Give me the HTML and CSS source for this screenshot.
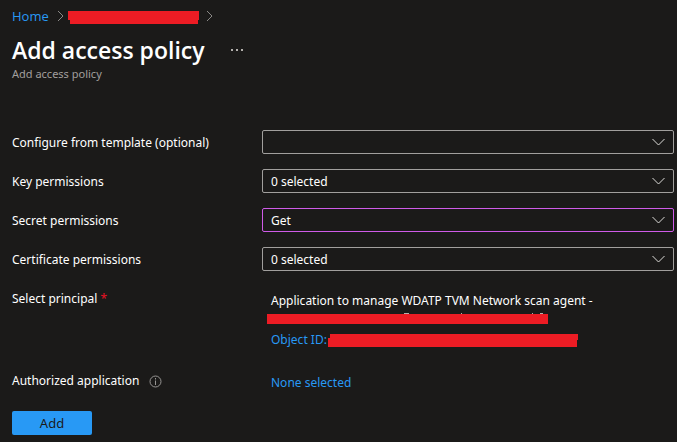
FILE: index.html
```html
<!DOCTYPE html>
<html lang="en">
<head>
<meta charset="utf-8">
<meta name="viewport" content="width=device-width, initial-scale=1">
<title>Add access policy</title>
<link rel="stylesheet" href="styles.css">
</head>
<body>
<header class="header">
  <nav class="breadcrumb" aria-label="Breadcrumb">
    <a class="link" href="#">Home</a>
    <svg class="separator" width="7" height="12" viewBox="0 0 7 12" aria-hidden="true"><path d="M1 1l5 5-5 5"/></svg>
    <svg class="redacted" width="131" height="13" viewBox="0 0 131 13" aria-hidden="true"><path d="M0 0h131v9h-1v4H2V9H0z"/></svg>
    <svg class="separator" width="7" height="12" viewBox="0 0 7 12" aria-hidden="true"><path d="M1 1l5 5-5 5"/></svg>
  </nav>
  <div class="title-row">
    <h1 class="title">Add access policy</h1>
    <button class="more" type="button" aria-label="More">
      <svg width="12" height="2" viewBox="0 0 12 2" aria-hidden="true"><path d="M0 0h2v2H0zM5 0h2v2H5zM10 0h2v2h-2z"/></svg>
    </button>
  </div>
  <p class="subtitle">Add access policy</p>
</header>
<main>
  <form class="form">
    <div class="row">
      <label class="label" for="template">Configure from template (optional)</label>
      <div class="picker">
        <select class="select" id="template"><option></option></select>
        <svg class="chevron" width="13" height="8" viewBox="0 0 13 8" aria-hidden="true"><path d="M.5 1l6 6 6-6"/></svg>
      </div>
    </div>
    <div class="row">
      <label class="label" for="key">Key permissions</label>
      <div class="picker">
        <select class="select" id="key"><option>0 selected</option></select>
        <svg class="chevron" width="13" height="8" viewBox="0 0 13 8" aria-hidden="true"><path d="M.5 1l6 6 6-6"/></svg>
      </div>
    </div>
    <div class="row">
      <label class="label" for="secret">Secret permissions</label>
      <div class="picker">
        <select class="select select-changed" id="secret"><option>Get</option></select>
        <svg class="chevron" width="13" height="8" viewBox="0 0 13 8" aria-hidden="true"><path d="M.5 1l6 6 6-6"/></svg>
      </div>
    </div>
    <div class="row">
      <label class="label" for="certificate">Certificate permissions</label>
      <div class="picker">
        <select class="select" id="certificate"><option>0 selected</option></select>
        <svg class="chevron" width="13" height="8" viewBox="0 0 13 8" aria-hidden="true"><path d="M.5 1l6 6 6-6"/></svg>
      </div>
    </div>
    <div class="row">
      <div class="label">Select principal <span class="required">*</span></div>
      <div class="value">
        <div>Application to manage WDATP TVM Network scan agent -</div>
        <svg class="principal-id" width="281" height="12" viewBox="0 0 281 12" aria-hidden="true">
          <path class="bar" d="M0 2h281v10H0z"/>
          <path class="glyph-tops" d="M137 1h5v1h-5zM194 1h1v1h-1zM265 1h1v1h-1zM273 1h3v1h-3z"/>
        </svg>
        <div class="object">
          <a class="link" href="#">Object ID:</a>
          <svg class="redacted" width="250" height="13" viewBox="0 0 250 13" aria-hidden="true"><path d="M2 0h248v6h-1v7H0V4h2z"/></svg>
        </div>
      </div>
    </div>
    <div class="row">
      <div class="label label-info">Authorized application
        <svg class="info" width="13" height="13" viewBox="0 0 13 13" aria-hidden="true"><circle cx="6.5" cy="6.5" r="5.5"/><path d="M6.5 5.5V10M6.5 3v1.5"/></svg>
      </div>
      <div class="value"><a class="link" href="#">None selected</a></div>
    </div>
    <button class="add" type="button">Add</button>
  </form>
</main>
</body>
</html>
```
FILE: styles.css
```css
* {
  box-sizing: border-box;
}

body {
  margin: 0;
  background: #1b1a19;
  color: #fff;
  font: 12px/20px "Segoe UI", "Noto Sans", "Open Sans", sans-serif;
}

svg {
  display: block;
  flex: none;
}

.header {
  padding: 6px 12px 0;
}

.breadcrumb {
  display: flex;
  align-items: center;
  gap: 8px;
  height: 20px;
  font-family: "Segoe UI", "Open Sans", sans-serif;
  font-size: 13px;
}

.breadcrumb .redacted {
  margin: 2px -1px 0 -4px;
}

.link {
  color: #2899f5;
  text-decoration: none;
}

.separator {
  fill: none;
  stroke: #8a8886;
}

.redacted,
.bar {
  fill: #ed1c24;
}

.title-row {
  display: flex;
  align-items: center;
  gap: 20px;
  margin-top: 8px;
}

.title {
  margin: 0;
  font-family: "Segoe UI", "Open Sans", sans-serif;
  font-size: 23px;
  font-weight: 600;
  line-height: 32px;
}

.more {
  padding: 6px;
  border: 0;
  background: none;
  fill: #b3b0ad;
}

.subtitle {
  margin: 0;
  color: #a19f9d;
  font-size: 11px;
  line-height: 16px;
}

.form {
  display: flex;
  flex-direction: column;
  gap: 13px;
  padding: 48px 3px 6px 12px;
}

.row {
  display: grid;
  grid-template-columns: 250px 1fr;
  align-items: start;
}

.label {
  line-height: 26px;
}

.label-info {
  display: flex;
  align-items: center;
  gap: 10px;
}

.required {
  color: #e81123;
}

.picker {
  display: grid;
  align-items: center;
}

.picker > * {
  grid-area: 1 / 1;
}

.select {
  width: 100%;
  height: 24px;
  padding: 2px 32px 0 8px;
  appearance: none;
  border: 1px solid #a19f9d;
  border-radius: 2px;
  background: transparent;
  color: inherit;
  font: inherit;
}

.select-changed {
  border-color: #cf5be8;
}

.chevron {
  justify-self: end;
  margin-right: 9px;
  fill: none;
  stroke: #dddbd9;
  pointer-events: none;
}

.value {
  padding: 5px 0 5px 9px;
}

.principal-id {
  margin: 1px 0 6px -4px;
}

.glyph-tops {
  fill: #b3b0ad;
}

.object {
  display: flex;
  align-items: center;
  gap: 1px;
}

.info {
  fill: none;
  stroke: #979593;
}

.add {
  align-self: flex-start;
  width: 80px;
  height: 24px;
  padding: 0;
  border: 0;
  border-radius: 2px;
  background: #2899f5;
  color: #1b1a19;
  font: inherit;
  font-size: 13px;
}
```
